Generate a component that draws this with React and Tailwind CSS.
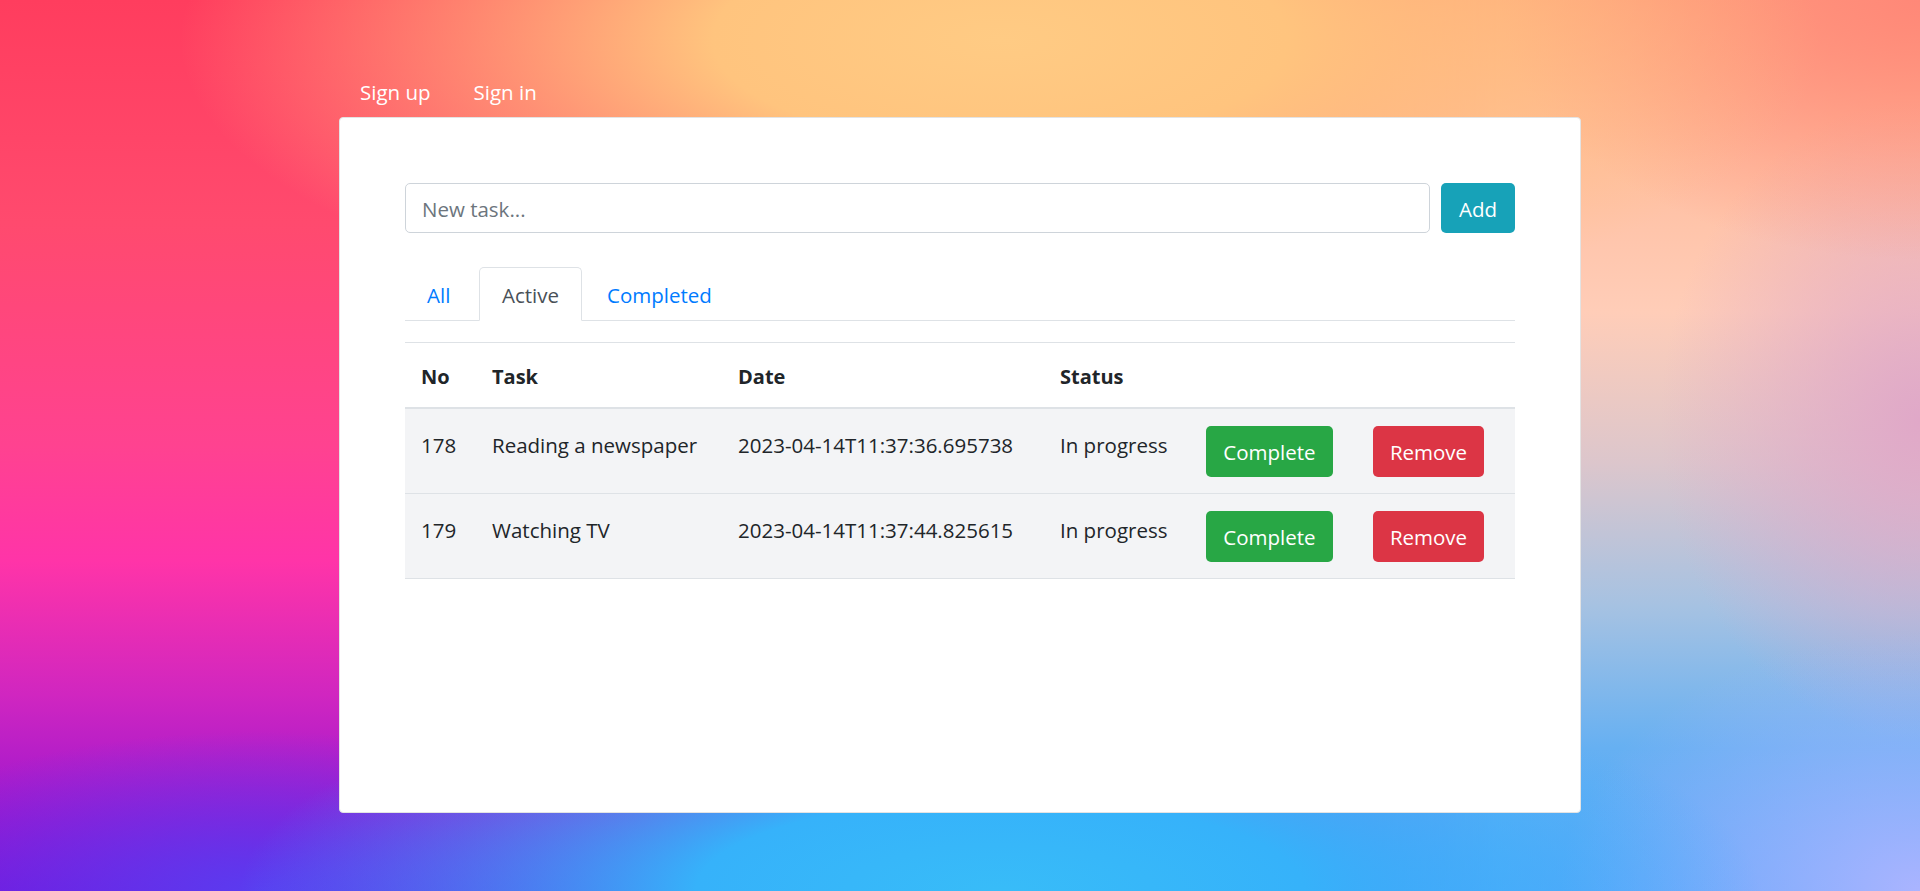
export default function App() {
  const rows = [
    { no: 178, task: "Reading a newspaper", date: "2023-04-14T11:37:36.695738" },
    { no: 179, task: "Watching TV", date: "2023-04-14T11:37:44.825615" },
  ];
  return (
    <div className="relative min-h-[891px] w-full overflow-hidden font-['Open_Sans',sans-serif] text-[#212529]">
      <div className="absolute inset-0">
        <div className="absolute inset-0 bg-[linear-gradient(to_bottom,#ff3d5e_0%,#ff4a6e_25%,#ff4290_50%,#ff34a8_63%,#d026c0_78%,#9a16d0_92%,#7a12da_100%)]" />
        <div className="absolute inset-0 bg-[linear-gradient(to_bottom,#ffa480_0%,#ffbea0_18%,#ffcdb8_35%,#dcc6cc_52%,#a6c2e2_68%,#66b0f2_84%,#5aa6fa_100%)] [mask-image:linear-gradient(to_right,transparent_40%,black_78%)]" />
        <div className="absolute inset-0 bg-[radial-gradient(ellipse_820px_300px_at_1000px_40px,#ffcb84_0%,#ffc47e_35%,rgba(255,196,126,0)_100%),radial-gradient(ellipse_760px_230px_at_1000px_891px,#38bcf8_0%,#36b2fa_40%,rgba(56,180,248,0)_100%),radial-gradient(ellipse_420px_160px_at_260px_891px,#5a3cf0_0%,rgba(90,60,240,0)_100%),radial-gradient(ellipse_420px_260px_at_1920px_0px,#ff8878_0%,rgba(255,136,120,0)_100%),radial-gradient(ellipse_360px_260px_at_1920px_891px,#aab4ff_0%,rgba(170,180,255,0)_100%),radial-gradient(ellipse_260px_320px_at_1920px_420px,#e0a8c8_0%,rgba(224,168,200,0)_100%)]" />
      </div>

      <div className="relative mx-auto w-[1242px] pt-[77px]">
        <nav className="mb-[10px] flex text-[20.5px] leading-[30px] text-white">
          <a className="pl-[21px] pr-[22px]">Sign up</a>
          <a className="px-[21px]">Sign in</a>
        </nav>

        <div className="h-[696px] rounded-[4px] border border-[#e3e3e3] bg-white px-[65px] pt-[65px]">
          <div className="flex gap-[11px]">
            <div className="flex h-[50px] flex-1 items-center rounded-[5px] border border-[#ced4da] px-[16px] pt-[3px] text-[20.5px] text-[#6c757d]">
              New task...
            </div>
            <button className="h-[50px] w-[74px] rounded-[5px] bg-[#17a2b8] pt-[2px] text-[20.5px] text-white">Add</button>
          </div>

          <div className="mt-[34px] flex border-b border-[#dee2e6] text-[20.5px] leading-[30px]">
            <div className="-mb-px w-[74px] border border-transparent pb-[10px] pl-[21px] pt-[12px] text-left text-[#007bff]">All</div>
            <div className="-mb-px w-[103px] rounded-t-[5px] border border-[#dee2e6] border-b-white bg-white pb-[10px] pt-[12px] text-center text-[#495057]">Active</div>
            <div className="-mb-px w-[155px] border border-transparent pb-[10px] pt-[12px] text-center text-[#007bff]">Completed</div>
          </div>

          <table className="mt-[21px] w-full table-fixed border-collapse text-[20.5px] leading-[30px]">
            <colgroup>
              <col className="w-[71px]" />
              <col className="w-[246px]" />
              <col className="w-[322px]" />
              <col className="w-[146px]" />
              <col className="w-[167px]" />
              <col className="w-[158px]" />
            </colgroup>
            <thead>
              <tr className="border-t border-b-2 border-[#dee2e6] text-left text-[20px]">
                <th className="pb-[15px] pl-[16px] pt-[19px] font-bold">No</th>
                <th className="pb-[15px] pl-[16px] pt-[19px] font-bold">Task</th>
                <th className="pb-[15px] pl-[16px] pt-[19px] font-bold">Date</th>
                <th className="pb-[15px] pl-[16px] pt-[19px] font-bold">Status</th>
                <th className="pb-[15px] pl-[16px] pt-[19px]"></th>
                <th className="pb-[15px] pl-[16px] pt-[19px]"></th>
              </tr>
            </thead>
            <tbody>
              {rows.map((r) => (
                <tr key={r.no} className="border-b border-[#dee2e6] bg-[#f3f4f6]">
                  <td className="pl-[16px] pt-[21px] align-top">{r.no}</td>
                  <td className="whitespace-nowrap pl-[16px] pt-[21px] align-top">{r.task}</td>
                  <td className="whitespace-nowrap pl-[16px] pt-[21px] align-top">{r.date}</td>
                  <td className="whitespace-nowrap pl-[16px] pt-[21px] align-top">In progress</td>
                  <td className="pb-[16px] pl-[16px] pt-[17px] align-top">
                    <button className="h-[51px] w-[127px] rounded-[5px] bg-[#28a745] pt-[1px] text-[20.5px] text-white">Complete</button>
                  </td>
                  <td className="pb-[16px] pl-[16px] pt-[17px] align-top">
                    <button className="h-[51px] w-[111px] rounded-[5px] bg-[#dc3545] pt-[1px] text-[20.5px] text-white">Remove</button>
                  </td>
                </tr>
              ))}
            </tbody>
          </table>
        </div>
      </div>
    </div>
  );
}
